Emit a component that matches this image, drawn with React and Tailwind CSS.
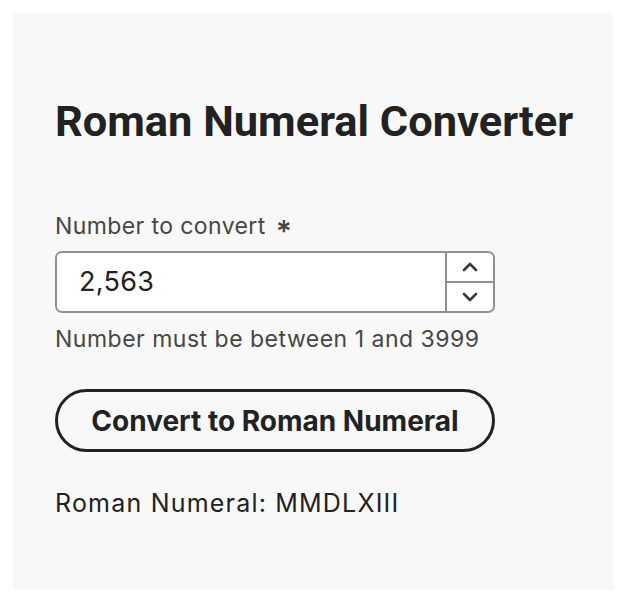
import React, { useState } from "react";

const toRoman = (n) => {
  const map = [
    [1000, "M"], [900, "CM"], [500, "D"], [400, "CD"], [100, "C"], [90, "XC"],
    [50, "L"], [40, "XL"], [10, "X"], [9, "IX"], [5, "V"], [4, "IV"], [1, "I"],
  ];
  let out = "";
  for (const [v, s] of map) {
    while (n >= v) {
      out += s;
      n -= v;
    }
  }
  return out;
};

export default function App() {
  const [valor, setValor] = useState(2563);
  const [resultado, setResultado] = useState("MMDLXIII");

  return (
    <div className="bg-white min-h-[608px] p-[13px] font-['Inter',sans-serif] text-[#222]">
      <div className="bg-[#f8f8f8] h-[577px] w-[601px] px-[42px] pt-[82px]">
        <h1 className="font-['Roboto',sans-serif] font-bold text-[43.4px] leading-[54px] text-[#222] whitespace-nowrap">
          Roman Numeral Converter
        </h1>

        <div className="mt-[62px]">
          <label className="flex items-center text-[23px] tracking-[0.4px] text-[#464646] leading-[30px]">
            Number to convert
            <span className="ml-[10px] text-[30px] font-semibold leading-[20px] mt-[10px]">*</span>
          </label>
          <div className="mt-[10px] flex w-[440px] h-[62px] border-2 border-[#909090] rounded-[7px] bg-white overflow-hidden">
            <input
              value={valor.toLocaleString("en-US")}
              onChange={(e) => setValor(Number(e.target.value.replace(/,/g, "")) || 0)}
              className="flex-1 min-w-0 px-[22px] text-[27px] tracking-[0.3px] text-[#222] bg-white outline-none"
            />
            <div className="w-[48px] flex flex-col border-l-2 border-[#909090]">
              <button
                onClick={() => setValor(valor + 1)}
                className="flex-1 flex items-center justify-center border-b-2 border-[#909090] bg-white"
              >
                <svg width="16" height="10" viewBox="0 0 16 10" fill="none">
                  <path d="M2 8L8 2L14 8" stroke="#3a3a3a" strokeWidth="2.6" strokeLinecap="round" strokeLinejoin="round" />
                </svg>
              </button>
              <button
                onClick={() => setValor(valor - 1)}
                className="flex-1 flex items-center justify-center bg-white"
              >
                <svg width="16" height="10" viewBox="0 0 16 10" fill="none">
                  <path d="M2 2L8 8L14 2" stroke="#3a3a3a" strokeWidth="2.6" strokeLinecap="round" strokeLinejoin="round" />
                </svg>
              </button>
            </div>
          </div>
          <p className="mt-[11px] text-[23px] tracking-[0.5px] leading-[30px] text-[#464646]">
            Number must be between 1 and 3999
          </p>
        </div>

        <button
          onClick={() => setResultado(toRoman(valor))}
          className="mt-[35px] w-[440px] h-[63px] rounded-full border-[3px] border-[#222] font-bold text-[28px] text-[#222] bg-transparent"
        >
          Convert to Roman Numeral
        </button>

        <p className="mt-[34px] text-[25px] tracking-[1.2px] leading-[34px] text-[#222]">
          Roman Numeral: {resultado}
        </p>
      </div>
    </div>
  );
}
